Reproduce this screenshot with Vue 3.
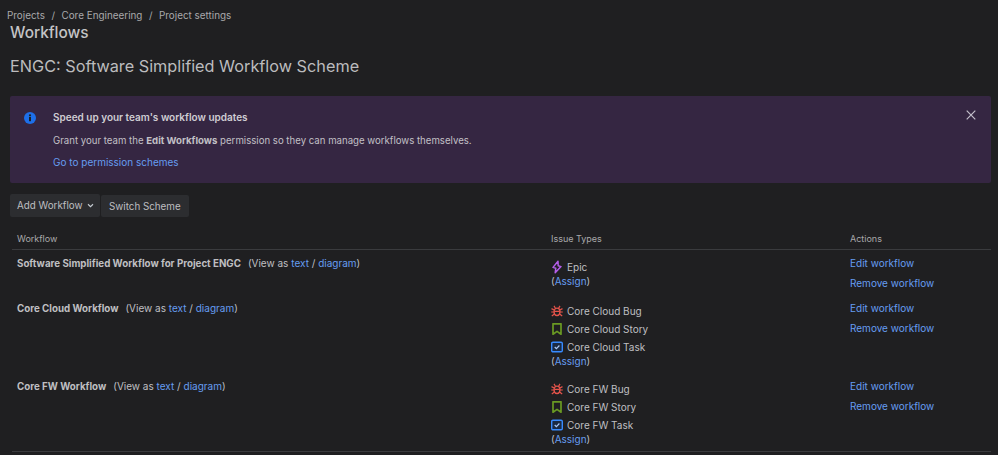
<template>
  <div class="page">
    <!-- 面包屑 -->
    <nav class="crumbs">
      <span>Projects</span><i>/</i><span>Core Engineering</span><i>/</i><span>Project settings</span>
    </nav>
    <h1>Workflows</h1>
    <h2>ENGC: Software Simplified Workflow Scheme</h2>

    <!-- 提示条 -->
    <section class="banner">
      <svg class="info" viewBox="0 0 12 12" width="12" height="12">
        <circle cx="6" cy="6" r="6" fill="#1d6fe8" />
        <rect x="5" y="5" width="2" height="4.2" fill="#1d2125" />
        <circle cx="6" cy="3.3" r="1.1" fill="#1d2125" />
      </svg>
      <div class="banner-body">
        <div class="banner-title">Speed up your team's workflow updates</div>
        <p>Grant your team the <b>Edit Workflows</b> permission so they can manage workflows themselves.</p>
        <a>Go to permission schemes</a>
      </div>
      <svg class="close" viewBox="0 0 10 10" width="10" height="10">
        <path d="M.7.7l8.6 8.6M9.3.7L.7 9.3" stroke="#c4c0cc" stroke-width="1.2" fill="none" />
      </svg>
    </section>

    <div class="buttons">
      <button class="add">Add Workflow
        <svg viewBox="0 0 8 6" width="7" height="5"><path d="M1 1.5l3 3 3-3" stroke="#c7cdd4" stroke-width="1.3" fill="none" /></svg>
      </button>
      <button class="switch">Switch Scheme</button>
    </div>

    <!-- 工作流列表 -->
    <div class="table">
      <div class="row head">
        <div class="c1">Workflow</div>
        <div class="c2">Issue Types</div>
        <div class="c3">Actions</div>
      </div>
      <div class="row" v-for="wf in workflows" :key="wf.name" :class="wf.cls">
        <div class="c1">
          <b>{{ wf.name }}</b><span class="view">(View as <a>text</a> / <a>diagram</a>)</span>
        </div>
        <div class="c2">
          <div class="type" v-for="t in wf.types" :key="t.label">
            <svg v-if="t.kind === 'epic'" viewBox="0 0 12 14" width="12" height="14">
              <path d="M7 1.200L2 7.400l2.800.8L4.200 12.800 10 6.600 7.200 5.800z" fill="none" stroke="#b45ee8" stroke-width="1.500" stroke-linejoin="round" />
            </svg>
            <svg v-else-if="t.kind === 'bug'" viewBox="0 0 12 12" width="12" height="12">
              <ellipse cx="6" cy="6.800" rx="2.900" ry="3.700" fill="none" stroke="#e5544b" stroke-width="1.400" />
              <path d="M3.300 6.300h5.400M4.400 3.200L3 .9M7.600 3.200L9 .9M3.200 5L.5 3.600M8.800 5l2.700-1.400M3 7H.2M9 7h2.800M3.400 9L.8 11M8.600 9L11.200 11" stroke="#e5544b" stroke-width="1.200" fill="none" />
            </svg>
            <svg v-else-if="t.kind === 'story'" viewBox="0 0 12 12" width="12" height="12">
              <path d="M2 .8h8v10.400L6 8.400 2 11.200z" fill="none" stroke="#6a9a23" stroke-width="1.700" stroke-linejoin="round" />
            </svg>
            <svg v-else viewBox="0 0 12 12" width="12" height="12">
              <rect x=".7" y="1.200" width="10.600" height="9.600" rx="1.200" fill="#1a2a44" stroke="#388bff" stroke-width="1.400" />
              <path d="M3.700 6l1.700 1.700 3-3.200" fill="none" stroke="#a9c8f5" stroke-width="1.200" />
            </svg>
            <span>{{ t.label }}</span>
          </div>
          <div class="assign">(<a>Assign</a>)</div>
        </div>
        <div class="c3">
          <a>Edit workflow</a>
          <a>Remove workflow</a>
        </div>
      </div>
    </div>
  </div>
</template>

<script setup>
const workflows = [
  {
    name: 'Software Simplified Workflow for Project ENGC',
    cls: 'first',
    types: [{ kind: 'epic', label: 'Epic' }]
  },
  {
    name: 'Core Cloud Workflow',
    types: [
      { kind: 'bug', label: 'Core Cloud Bug' },
      { kind: 'story', label: 'Core Cloud Story' },
      { kind: 'task', label: 'Core Cloud Task' }
    ]
  },
  {
    name: 'Core FW Workflow',
    types: [
      { kind: 'bug', label: 'Core FW Bug' },
      { kind: 'story', label: 'Core FW Story' },
      { kind: 'task', label: 'Core FW Task' }
    ]
  }
]
</script>

<style>
html, body {
  margin: 0;
  background: #1f1f21;
}
</style>

<style scoped>
.page {
  width: 998px;
  height: 455px;
  overflow: hidden;
  box-sizing: border-box;
  padding: 8px 7px 0 10px;
  font-family: Inter, "Liberation Sans", sans-serif;
  font-size: 10px;
  color: #bfbfc1;
  background: #1f1f21;
}

a {
  color: #669df1;
}

.crumbs {
  margin-left: -3px;
  height: 14px;
  line-height: 14px;
  font-size: 9.900px;
  color: #a9a9ab;
}

.crumbs i {
  font-style: normal;
  margin: 0 6.500px;
}

h1 {
  margin: 0;
  font-size: 15.400px;
  line-height: 21px;
  font-weight: 500;
  color: #c4c4c6;
}

h2 {
  margin: 11px 0 0;
  font-size: 16.250px;
  line-height: 24px;
  font-weight: 400;
  color: #bcbcbe;
}

.banner {
  display: flex;
  margin-top: 18px;
  height: 87px;
  box-sizing: border-box;
  padding: 14px 15px 0 14px;
  background: #352642;
  border-radius: 2px;
}

.info {
  margin-top: 2px;
  flex: none;
}

.banner-body {
  flex: 1;
  margin-left: 17px;
  line-height: 14px;
}

.banner-title {
  font-weight: 600;
  color: #cfcdd3;
}

.banner-body p {
  margin: 10px 0 7px;
  font-size: 9.650px;
  color: #c2c0c6;
}

.buttons {
  display: flex;
  gap: 1px;
  margin-top: 11px;
}

button {
  height: 23px;
  padding: 0 8px;
  border: 0;
  border-radius: 2px;
  background: #2c2d30;
  color: #bfbfc1;
  font: inherit;
  font-size: 9.800px;
  white-space: nowrap;
}

button svg {
  margin-left: 2px;
  vertical-align: 1px;
}

.add {
  width: 90px;
  padding: 0 7px;
  text-align: left;
}

.switch {
  height: 22px;
  margin-top: 1px;
}

.table {
  margin: 12px 0 0 2px;
}

.row {
  display: flex;
  line-height: 14px;
}

.head {
  height: 20px;
  align-items: center;
  border-bottom: 1px solid #3a3b3e;
  font-size: 9px;
  color: #a9a9ab;
}

.c1 {
  width: 539px;
  padding-left: 5px;
  box-sizing: border-box;
  flex: none;
}

.c1 b {
  font-size: 9.750px;
}

.c2 {
  width: 299px;
  flex: none;
}

.c3 {
  display: flex;
  flex-direction: column;
  gap: 6px;
  align-items: flex-start;
}

.row:not(.head) .c1,
.row:not(.head) .c3 {
  padding-top: 6px;
}

.row:not(.head) .c2 {
  padding-top: 7px;
  padding-bottom: 5px;
}

.row.first .c2 {
  padding-top: 8px;
  padding-bottom: 7px;
}

.row:last-child {
  border-bottom: 1px solid #3a3b3e;
}

.view {
  margin-left: 7px;
}

.type {
  display: flex;
  align-items: center;
  gap: 4px;
  height: 18px;
}

.type svg {
  flex: none;
}

.assign {
  margin-top: -2px;
}
</style>
